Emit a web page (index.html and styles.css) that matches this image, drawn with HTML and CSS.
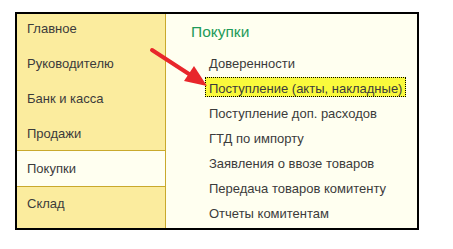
FILE: index.html
```html
<!DOCTYPE html>
<html lang="ru">
<head>
<meta charset="utf-8">
<link rel="stylesheet" href="styles.css">
</head>
<body>
<div class="frame">
  <nav class="sidebar">
    <div class="nav-item">Главное</div>
    <div class="nav-item">Руководителю</div>
    <div class="nav-item">Банк и касса</div>
    <div class="nav-item">Продажи</div>
    <div class="nav-item selected">Покупки</div>
    <div class="nav-item">Склад</div>
  </nav>
  <main class="content">
    <div class="title">Покупки</div>
    <ul class="links">
      <li><span class="link">Доверенности</span></li>
      <li><span class="link focused">Поступление (акты, накладные)</span></li>
      <li><span class="link">Поступление доп. расходов</span></li>
      <li><span class="link">ГТД по импорту</span></li>
      <li><span class="link">Заявления о ввозе товаров</span></li>
      <li><span class="link">Передача товаров комитенту</span></li>
      <li><span class="link">Отчеты комитентам</span></li>
    </ul>
  </main>
</div>
<svg class="arrow" width="453" height="249" viewBox="0 0 453 249">
  <line x1="152" y1="50" x2="192" y2="76" stroke="#e8262b" stroke-width="4" stroke-linecap="round"/>
  <polygon points="207,86 184,81 194,66" fill="#e8262b"/>
</svg>
</body>
</html>
```

FILE: styles.css
```css
html, body {
  margin: 0;
  padding: 0;
  background: #ffffff;
}

body {
  width: 453px;
  height: 249px;
  overflow: hidden;
  font-family: "Liberation Sans", Arial, sans-serif;
  font-size: 13px;
  color: #3b3b3b;
}

.frame {
  margin: 12px 0 0 15px;
  width: 400px;
  height: 214px;
  border: 2px solid #000;
  display: flex;
  background: #fffff0;
  overflow: hidden;
}

.sidebar {
  width: 148px;
  flex: none;
  background: #fbec9e;
  border-right: 1px solid #c9a92c;
  display: flex;
  flex-direction: column;
}

.nav-item {
  height: 35px;
  line-height: 35px;
  padding-left: 10px;
  box-sizing: border-box;
  white-space: nowrap;
}

.nav-item:first-child {
  height: 32px;
  line-height: 29px;
}

.nav-item.selected {
  background: #fffff0;
  border-top: 1px solid #c9a92c;
  border-bottom: 1px solid #c9a92c;
  margin: -1px 0;
  height: 37px;
}

.content {
  flex: 1;
  padding: 8px 0 0 0;
}

.title {
  font-size: 15.5px;
  line-height: 20px;
  color: #1f9b5a;
  padding-left: 25px;
  margin-bottom: 10px;
}

.links {
  list-style: none;
  margin: 0;
  padding: 0 0 0 39px;
}

.links li {
  height: 20px;
  margin-bottom: 5px;
}

.link {
  display: inline-block;
  line-height: 14px;
  padding: 4px 3px 0 3px;
  border: 1px dotted transparent;
  white-space: nowrap;
}

.link.focused {
  background: #fafa3c;
  border-color: #000;
}

.arrow {
  position: absolute;
  left: 0;
  top: 0;
  pointer-events: none;
}
```
